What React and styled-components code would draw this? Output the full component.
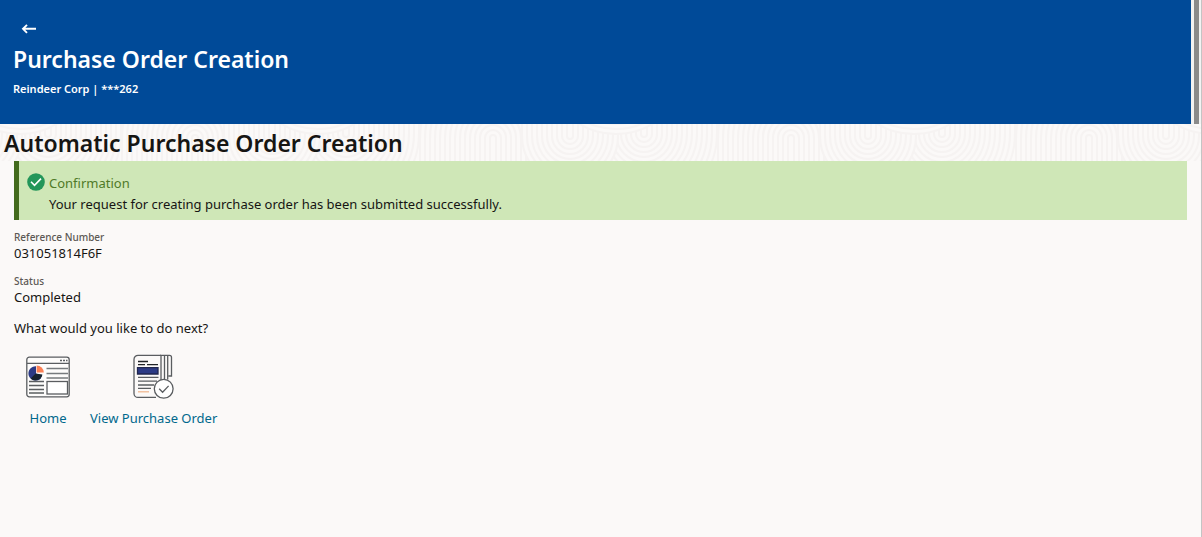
import React from "react"
import styled, { createGlobalStyle } from "styled-components"

const GlobalStyle = createGlobalStyle`
  * {
    box-sizing: border-box;
  }
  body {
    margin: 0;
    background: #fbf9f8;
    color: #161513;
    font-family: "Noto Sans", "Open Sans", sans-serif;
    font-size: 13px;
    line-height: 21px;
  }
`

const Page = styled.div`
  min-height: 100vh;
  border-right: 1px solid #c4c4c4;
`

const TopBar = styled.div`
  display: flex;
`

const Header = styled.header`
  flex: 1;
  padding: 20px 13px 25px;
  background: #004a98;
  color: #fff;
`

const BackButton = styled.button`
  display: block;
  height: 18px;
  padding: 0 8px;
  border: 0;
  background: transparent;
  color: inherit;
  cursor: pointer;

  svg {
    display: block;
  }
`

const Title = styled.h1`
  margin: 3px 0 0;
  font-size: 23px;
  font-weight: 600;
  line-height: 36px;
`

const Party = styled.div`
  margin-top: 2px;
  font-size: 11px;
  font-weight: 600;
  line-height: 20px;
`

const ScrollTrack = styled.div`
  width: 10px;
  padding: 0 2px 0 3px;
  background: #f3f3f3;
`

const ScrollThumb = styled.div`
  height: 100%;
  background: #8b8b8b;
`

const Band = styled.div`
  position: relative;
  padding: 1px 4px 0;
`

const Swirls = styled.svg`
  position: absolute;
  inset: 0;
  width: 100%;
  height: 100%;
`

const SubTitle = styled.h2`
  position: relative;
  margin: 0;
  font-size: 23px;
  font-weight: 600;
  line-height: 36px;
`

const Content = styled.main`
  padding: 0 14px;
`

const Banner = styled.div`
  display: flex;
  gap: 4px;
  padding: 12px 8px 5px;
  border-left: 5px solid #436b1d;
  background: #cfe7b7;

  svg {
    flex-shrink: 0;
  }
`

const BannerTitle = styled.div`
  color: #4f7a28;
`

const Details = styled.dl`
  margin: 10px 0 0;
`

const Field = styled.div`
  margin-bottom: 12px;
`

const Label = styled.dt`
  color: #5b5854;
  font-size: 10px;
  font-weight: 500;
  line-height: 14px;
`

const Value = styled.dd`
  margin: 0;
  line-height: 18px;
`

const Question = styled.p`
  margin: 0;
`

const Actions = styled.nav`
  display: flex;
  gap: 20px;
  margin-top: 15px;
  padding-left: 12px;
`

const Action = styled.a`
  display: flex;
  flex-direction: column;
  align-items: center;
  gap: 8px;
  color: #00688c;
  text-decoration: none;

  &:hover {
    text-decoration: underline;
  }
`

const range = (from, to) => {
  const radii = []
  for (let r = from; r >= to; r -= 5) radii.push(r)
  return radii
}

function Arch({ x, y, size }) {
  return range(size, 3).map((r) => (
    <path key={r} d={`M${x - r} 40V${y}a${r} ${r} 0 0 1 ${2 * r} 0V40`} />
  ))
}

function Bowl({ x, y, size }) {
  return range(size, 3).map((r) => (
    <path key={r} d={`M${x - r} -2V${y}a${r} ${r} 0 0 0 ${2 * r} 0V-2`} />
  ))
}

function SwirlPattern() {
  return (
    <Swirls aria-hidden="true">
      <defs>
        <pattern id="swirls" width="298" height="37" patternUnits="userSpaceOnUse">
          <g fill="#fbf9f8" stroke="#f6f3f2" strokeWidth="2">
            <Arch x={195} y={14} size={73} />
            <Arch x={-103} y={14} size={73} />
            <Bowl x={48} y={10} size={73} />
            <Bowl x={346} y={10} size={73} />
            <Arch x={195} y={14} size={28} />
            <Bowl x={272} y={12} size={48} />
            <Bowl x={-26} y={12} size={48} />
            {range(70, 55).map((r) => (
              <circle key={r} cx="318" cy="-60" r={r} />
            ))}
            {range(70, 55).map((r) => (
              <circle key={r} cx="20" cy="-60" r={r} />
            ))}
          </g>
        </pattern>
      </defs>
      <rect width="100%" height="100%" fill="url(#swirls)" />
    </Swirls>
  )
}

function BackIcon() {
  return (
    <svg width="15" height="18" viewBox="0 0 15 18" fill="none" stroke="currentColor" strokeWidth="1.9">
      <path d="M15 8.8H2M6 4.8l-4 4 4 4" />
    </svg>
  )
}

function SuccessIcon() {
  return (
    <svg width="18" height="18" viewBox="0 0 18 18" fill="none">
      <circle cx="9" cy="9" r="8.8" fill="#23965a" />
      <path d="M4 8.8l3.5 3.6L14 5.6" stroke="#fff" strokeWidth="1.6" />
    </svg>
  )
}

function HomeIcon() {
  return (
    <svg width="44" height="46" viewBox="0 0 44 46" fill="none" stroke="#5a5d60" strokeWidth="1.3">
      <rect x="0.8" y="3.2" width="42.4" height="39.6" rx="2.5" fill="#fdfcfb" />
      <path d="M1 9.4h42" />
      <path d="M34 6.5h2M37 6.5h2M40 6.5h1.5" />
      <path d="M10 12.2v7l5 5A7.2 7.2 0 1 1 10 12.2z" fill="#2c3a85" stroke="none" />
      <path d="M9.6 19.4l6.8 1A7 7 0 0 1 4.6 24.4z" fill="#17222e" stroke="none" />
      <path d="M10.6 11.4a7.2 7.2 0 0 1 7.2 7.2h-7.2z" fill="#fa8055" stroke="none" />
      <path d="M20.5 14.5H42M20.5 19.5H42M20.5 24H42" stroke="#777b7e" />
      <path d="M3 27.5h15M3 31.5h15M3 35.5h15M3 39h15" />
      <rect x="21" y="27.5" width="20.5" height="12.5" fill="#fff" />
    </svg>
  )
}

function OrderIcon() {
  return (
    <svg width="44" height="46" viewBox="0 0 44 46" fill="none" stroke="#5a5d60" strokeWidth="1.3">
      <path d="M29 1.4H6a4 4 0 0 0-4 4v34a4 4 0 0 0 4 4h18" />
      <path d="M28 1.4h9.5a2 2 0 0 1 2 2V22H36.5M29 1.4v26M32.5 1.4v24M35.7 1.4v24" />
      <path d="M6 7.5h10M6 10.6h7M15 10.6h11" stroke="#202326" />
      <path d="M5.5 13.6h20.5V20H5.5z" fill="#2c3a85" stroke="#20264e" />
      <path d="M6 23.4h20.5M6 27.2h19M6 31h16M6 34.4h13" />
      <path d="M6 37.8h11" stroke="#f0b992" />
      <circle cx="31.7" cy="34.8" r="9.4" fill="#fff" />
      <path d="M27.2 34.8l3.4 3.4 6-6.3" />
    </svg>
  )
}

function App() {
  return (
    <Page>
      <GlobalStyle />
      <TopBar>
        <Header>
          <BackButton type="button" aria-label="Back">
            <BackIcon />
          </BackButton>
          <Title>Purchase Order Creation</Title>
          <Party>Reindeer Corp | ***262</Party>
        </Header>
        <ScrollTrack>
          <ScrollThumb />
        </ScrollTrack>
      </TopBar>
      <Band>
        <SwirlPattern />
        <SubTitle>Automatic Purchase Order Creation</SubTitle>
      </Band>
      <Content>
        <Banner role="status">
          <SuccessIcon />
          <div>
            <BannerTitle>Confirmation</BannerTitle>
            <div>Your request for creating purchase order has been submitted successfully.</div>
          </div>
        </Banner>
        <Details>
          <Field>
            <Label>Reference Number</Label>
            <Value>031051814F6F</Value>
          </Field>
          <Field>
            <Label>Status</Label>
            <Value>Completed</Value>
          </Field>
        </Details>
        <Question>What would you like to do next?</Question>
        <Actions>
          <Action href="#home">
            <HomeIcon />
            Home
          </Action>
          <Action href="#purchase-order">
            <OrderIcon />
            View Purchase Order
          </Action>
        </Actions>
      </Content>
    </Page>
  )
}

export default App
